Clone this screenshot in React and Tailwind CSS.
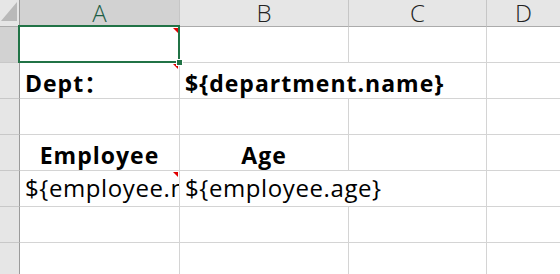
import React from "react";

const F = { fontFamily: '"Open Sans", "Noto Sans CJK SC", sans-serif' };

function Cell({ children, className = "", noRight = false, clip = false, extra = null }) {
  return (
    <div
      className={`relative h-[36px] border-b border-[#d4d4d4] ${noRight ? "" : "border-r"} ${clip ? "overflow-hidden" : "overflow-visible"} ${className}`}
    >
      {children}
      {extra}
    </div>
  );
}

function RedMark() {
  return (
    <div className="absolute right-[1px] top-[1px] w-0 h-0 border-t-[5px] border-t-[#e00000] border-l-[5px] border-l-transparent z-10" />
  );
}

function RowHead({ sel = false }) {
  return (
    <div
      className={`h-[36px] border-b border-r border-b-[#c8c8c8] border-r-[#9b9b9b] ${sel ? "bg-[#d2d2d2]" : "bg-[#e6e6e6]"}`}
    />
  );
}

const bold = "flex items-end pb-[1px] text-[23px] font-bold tracking-[1px] text-black leading-[28px]";
const norm = "flex items-end pb-[3px] text-[24px] tracking-[0.6px] text-black leading-[30px]";

export default function App() {
  const colHead = "h-[27px] flex items-center justify-center text-[24px] leading-[26px] font-light border-r border-b border-r-[#c6c6c6] border-b-[#ababab]";
  return (
    <div className="w-[560px] h-[274px] overflow-hidden bg-white" style={F}>
      <div className="grid grid-cols-[20px_160px_169px_138px_1fr]">
        {/* header row */}
        <div className="relative h-[27px] bg-[#e6e6e6] border-r border-b border-r-[#9b9b9b] border-b-[#ababab]">
          <svg className="absolute left-0 top-0" width="19" height="26" viewBox="0 0 19 26">
            <polygon points="17,2 17,21 1,21" fill="#b9b9b9" />
          </svg>
        </div>
        <div className={`${colHead} bg-[#d2d2d2] text-[#1d5e46] border-b-2 border-b-[#217346]`}>A</div>
        <div className={`${colHead} bg-[#e6e6e6] text-[#222]`}>B</div>
        <div className={`${colHead} bg-[#e6e6e6] text-[#222]`}>C</div>
        <div className={`${colHead} bg-[#e6e6e6] text-[#222] border-r-0`}>D</div>

        {/* row 1 */}
        <RowHead sel />
        <Cell
          extra={
            <>
              <RedMark />
              <div className="absolute left-[-2px] top-[-2px] w-[162px] h-[38px] border-2 border-[#217346] z-20 pointer-events-none" />
              <div className="absolute right-[-4px] bottom-[-4px] w-[7px] h-[7px] bg-[#217346] border border-white z-30" />
            </>
          }
        />
        <Cell />
        <Cell />
        <Cell noRight />

        {/* row 2 */}
        <RowHead />
        <Cell extra={<RedMark />} className={`${bold} px-[5px]`}>
          <span className="whitespace-nowrap">Dept：</span>
        </Cell>
        <Cell noRight className={`${bold} px-[5px]`}>
          <span className="whitespace-nowrap">{"${department.name}"}</span>
        </Cell>
        <Cell />
        <Cell noRight />

        {/* row 3 */}
        <RowHead />
        <Cell />
        <Cell />
        <Cell />
        <Cell noRight />

        {/* row 4 */}
        <RowHead />
        <Cell className={`${bold} justify-center`}>
          <span className="whitespace-nowrap">Employee</span>
        </Cell>
        <Cell className={`${bold} justify-center`}>
          <span className="whitespace-nowrap">Age</span>
        </Cell>
        <Cell />
        <Cell noRight />

        {/* row 5 */}
        <RowHead />
        <Cell clip extra={<RedMark />} className={`${norm} pl-[5px]`}>
          <span className="block w-full overflow-hidden whitespace-nowrap">{"${employee.name}"}</span>
        </Cell>
        <Cell noRight className={`${norm} px-[5px]`}>
          <span className="whitespace-nowrap">{"${employee.age}"}</span>
        </Cell>
        <Cell />
        <Cell noRight />

        {/* row 6 */}
        <RowHead />
        <Cell />
        <Cell />
        <Cell />
        <Cell noRight />

        {/* row 7 */}
        <RowHead />
        <Cell />
        <Cell />
        <Cell />
        <Cell noRight />
      </div>
    </div>
  );
}
